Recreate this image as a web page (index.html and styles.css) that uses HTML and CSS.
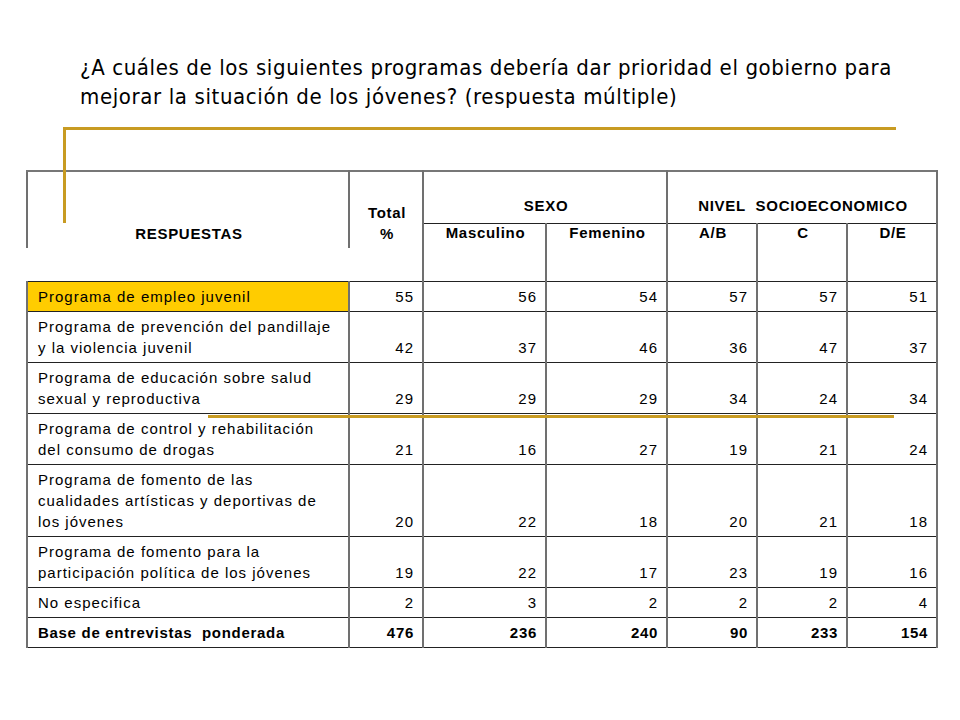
FILE: index.html
```html
<!DOCTYPE html>
<html lang="es">
<head>
<meta charset="utf-8">
<title>Prioridades del gobierno</title>
<link rel="stylesheet" href="styles.css">
</head>
<body>
<div class="slide">
  <h1 class="title">¿A cuáles de los siguientes programas debería dar prioridad el gobierno para<br>mejorar la situación de los jóvenes? (respuesta múltiple)</h1>
  <div class="rule-top"></div>
  <div class="rule-left"></div>
  <div class="rule-mid"></div>
  <table class="data">
    <colgroup>
      <col class="c1"><col class="c2"><col class="c3"><col class="c4"><col class="c5"><col class="c6"><col class="c7">
    </colgroup>
    <thead>
      <tr class="ra">
        <th rowspan="2" class="resp">RESPUESTAS</th>
        <th rowspan="2" class="tot">Total<br>%</th>
        <th colspan="2" class="grp">SEXO</th>
        <th colspan="3" class="grp">NIVEL&nbsp; SOCIOECONOMICO</th>
      </tr>
      <tr class="rb">
        <th rowspan="2" class="sub">Masculino</th>
        <th rowspan="2" class="sub">Femenino</th>
        <th rowspan="2" class="sub">A/B</th>
        <th rowspan="2" class="sub">C</th>
        <th rowspan="2" class="sub">D/E</th>
      </tr>
      <tr class="rc">
        <td class="blank"></td>
        <td class="blank"></td>
      </tr>
    </thead>
    <tbody>
      <tr><td class="lbl hl">Programa de empleo juvenil</td><td>55</td><td>56</td><td>54</td><td>57</td><td>57</td><td>51</td></tr>
      <tr><td class="lbl">Programa de prevención del pandillaje<br>y la violencia juvenil</td><td>42</td><td>37</td><td>46</td><td>36</td><td>47</td><td>37</td></tr>
      <tr><td class="lbl">Programa de educación sobre salud<br>sexual y reproductiva</td><td>29</td><td>29</td><td>29</td><td>34</td><td>24</td><td>34</td></tr>
      <tr><td class="lbl">Programa de control y rehabilitación<br>del consumo de drogas</td><td>21</td><td>16</td><td>27</td><td>19</td><td>21</td><td>24</td></tr>
      <tr><td class="lbl">Programa de fomento de las<br>cualidades artísticas y deportivas de<br>los jóvenes</td><td>20</td><td>22</td><td>18</td><td>20</td><td>21</td><td>18</td></tr>
      <tr><td class="lbl">Programa de fomento para la<br>participación política de los jóvenes</td><td>19</td><td>22</td><td>17</td><td>23</td><td>19</td><td>16</td></tr>
      <tr><td class="lbl">No especifica</td><td>2</td><td>3</td><td>2</td><td>2</td><td>2</td><td>4</td></tr>
      <tr class="base"><td class="lbl">Base de entrevistas&nbsp; ponderada</td><td>476</td><td>236</td><td>240</td><td>90</td><td>233</td><td>154</td></tr>
    </tbody>
  </table>
</div>
</body>
</html>
```
FILE: styles.css
```css
html, body {
  margin: 0;
  padding: 0;
  background: #ffffff;
}

.slide {
  position: relative;
  width: 960px;
  height: 720px;
  background: #ffffff;
  overflow: hidden;
}

.title {
  margin: 0;
  padding: 53px 0 0 80px;
  font-family: "DejaVu Sans Condensed", "DejaVu Sans", sans-serif;
  font-weight: normal;
  font-size: 22px;
  letter-spacing: 0.62px;
  line-height: 29px;
  color: #000;
  white-space: nowrap;
}

.rule-top {
  position: absolute;
  left: 64px;
  top: 127px;
  width: 832px;
  height: 3px;
  background: #c89b22;
}

.rule-left {
  position: absolute;
  left: 63px;
  top: 127px;
  width: 3px;
  height: 96px;
  background: #c89b22;
  z-index: 2;
}

.rule-mid {
  position: absolute;
  left: 208px;
  top: 415px;
  width: 686px;
  height: 3px;
  background: #c89b22;
  z-index: 2;
}

.data {
  margin: 59px 0 0 26px;
  border-collapse: collapse;
  table-layout: fixed;
  width: 910px;
  font-family: "Liberation Sans", Arial, sans-serif;
  font-size: 15px;
  line-height: 21px;
  color: #000;
}

.c1 { width: 322px; }
.c2 { width: 74px; }
.c3 { width: 123px; }
.c4 { width: 121px; }
.c5 { width: 90px; }
.c6 { width: 90px; }
.c7 { width: 90px; }

.data th,
.data td {
  border-top: 1px solid #222;
  border-bottom: 1px solid #222;
  border-left: 2px solid #707070;
  border-right: 2px solid #707070;
  padding: 4px 8px 4px 10px;
  white-space: nowrap;
}

.data th {
  font-weight: bold;
  letter-spacing: 0.7px;
  text-align: center;
}

.data thead tr.ra th {
  border-top: 2px solid #777;
}

.ra { height: 52px; }
.rb { height: 25px; }
.rc { height: 33px; }

.data th.grp {
  vertical-align: bottom;
  padding-bottom: 7px;
}

.data th.resp,
.data th.tot {
  vertical-align: bottom;
  border-bottom: none;
  padding-bottom: 4px;
}

.data th.sub {
  vertical-align: top;
  padding-top: 0;
  line-height: 17px;
}

.data td.blank {
  border-top: none;
  border-left: none;
  border-right: none;
  padding: 0;
}

.data tbody td {
  text-align: right;
  vertical-align: bottom;
  letter-spacing: 1px;
  padding-right: 8px;
}

.data tbody td.lbl {
  text-align: left;
  padding-left: 10px;
}

.data tbody td.hl {
  background: #ffcc00;
}

.data tbody tr.base td {
  font-weight: bold;
  letter-spacing: 0.7px;
}
```
